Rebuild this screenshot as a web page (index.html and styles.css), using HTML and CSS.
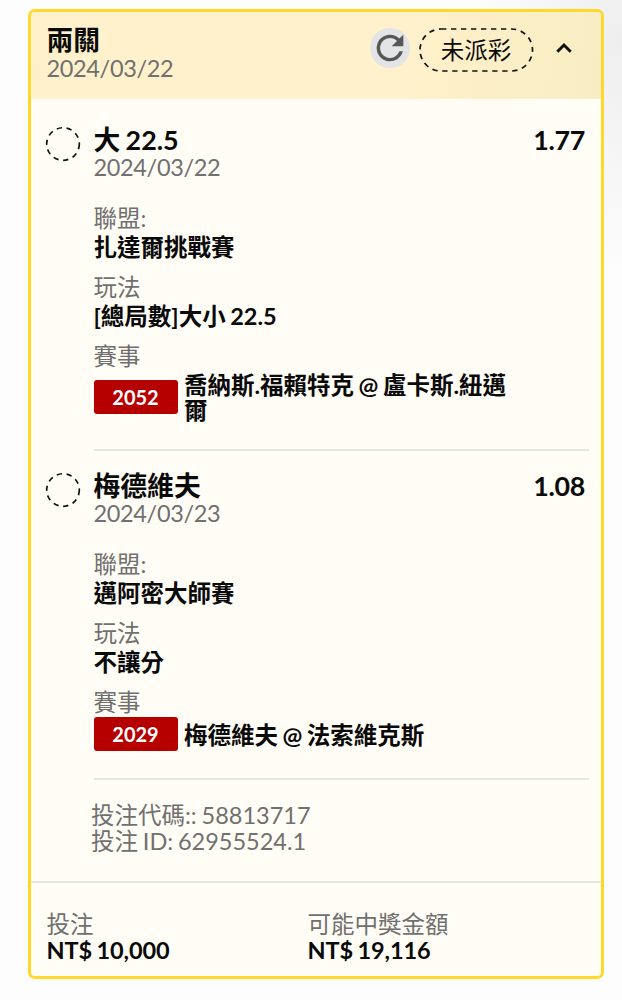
FILE: index.html
```html
<!DOCTYPE html>
<html lang="zh-Hant">

<head>
    <meta charset="UTF-8">
    <meta name="viewport" content="width=device-width, initial-scale=1.0">
    <title>投注</title>
    <link rel="stylesheet" href="styles.css">
</head>

<body>
    <div class="bet-card">
        <div class="bet-header">
            <div class="bet-heading">
                <div class="title">兩關</div>
                <div class="date">2024/03/22</div>
            </div>
            <button class="refresh-button" aria-label="refresh">
                <svg width="40" height="40" viewBox="0 0 24 24">
                    <path d="M17.65 6.35A7.96 7.96 0 0 0 12 4a8 8 0 1 0 7.73 10h-2.08A6 6 0 1 1 12 6c1.66 0 3.14.69 4.22 1.78L13 11h7V4z" fill="#575757" />
                </svg>
            </button>
            <div class="status">
                <svg class="status-outline" width="116" height="46" viewBox="0 0 116 46">
                    <rect x="2" y="2" width="112.5" height="42" rx="21" />
                </svg>
                <span>未派彩</span>
            </div>
            <svg class="chevron" width="18" height="12" viewBox="0 0 18 12">
                <path d="M2.3 9.7L9 3L15.7 9.7" />
            </svg>
        </div>

        <div class="leg">
            <svg class="leg-status" width="36" height="36" viewBox="0 0 36 36">
                <circle cx="18" cy="18" r="16.3" />
            </svg>
            <div class="leg-content">
                <div class="leg-top">
                    <div class="title">大 22.5</div>
                    <div class="odds">1.77</div>
                </div>
                <div class="date">2024/03/22</div>
                <div class="field first">
                    <div class="label">聯盟:</div>
                    <div class="value">扎達爾挑戰賽</div>
                </div>
                <div class="field">
                    <div class="label">玩法</div>
                    <div class="value">[總局數]大小 22.5</div>
                </div>
                <div class="field">
                    <div class="label">賽事</div>
                    <div class="match">
                        <span class="match-code">2052</span>
                        <span class="match-name">喬納斯.福賴特克 @ 盧卡斯.紐邁爾</span>
                    </div>
                </div>
            </div>
        </div>

        <div class="leg">
            <svg class="leg-status" width="36" height="36" viewBox="0 0 36 36">
                <circle cx="18" cy="18" r="16.3" />
            </svg>
            <div class="leg-content">
                <div class="leg-top">
                    <div class="title">梅德維夫</div>
                    <div class="odds">1.08</div>
                </div>
                <div class="date">2024/03/23</div>
                <div class="field first">
                    <div class="label">聯盟:</div>
                    <div class="value">邁阿密大師賽</div>
                </div>
                <div class="field">
                    <div class="label">玩法</div>
                    <div class="value">不讓分</div>
                </div>
                <div class="field">
                    <div class="label">賽事</div>
                    <div class="match">
                        <span class="match-code">2029</span>
                        <span class="match-name">梅德維夫 @ 法索維克斯</span>
                    </div>
                </div>
            </div>
        </div>

        <div class="bet-codes">
            <div>投注代碼:: 58813717</div>
            <div>投注 ID: 62955524.1</div>
        </div>

        <div class="bet-footer">
            <div>
                <div class="footer-label">投注</div>
                <div class="amount">NT$ 10,000</div>
            </div>
            <div>
                <div class="footer-label">可能中獎金額</div>
                <div class="amount">NT$ 19,116</div>
            </div>
        </div>
    </div>
</body>

</html>
```
FILE: styles.css
```css
* {
    box-sizing: border-box;
}

body {
    margin: 0;
    padding: 9px 18px 0 28px;
    height: 1000px;
    overflow: hidden;
    background: radial-gradient(ellipse 150px 240px at 622px 40px, #eeeeee, #fdfdfd);
    color: #0a0a0a;
    font-family: Lato, "Noto Sans CJK TC", sans-serif;
    font-size: 23.5px;
    word-spacing: -1.2px;
}

.bet-card {
    height: 970px;
    border: 3px solid #ffd829;
    border-radius: 7px;
    background-color: #fffdf5;
    overflow: hidden;
}

.bet-header {
    display: flex;
    height: 87px;
    padding: 15px 28px 0 15.5px;
    background: linear-gradient(100deg, #fff1cb 65%, #f8edc2);
}

.bet-heading {
    flex: 1;
    margin-top: -1px;
}

.title,
.odds {
    font-size: 26.8px;
    font-weight: bold;
    line-height: 28px;
}

.odds {
    letter-spacing: -0.3px;
}

.date {
    line-height: 27px;
    color: #707070;
    letter-spacing: -0.35px;
}

.bet-heading .date {
    line-height: 28px;
}

.refresh-button {
    width: 40px;
    height: 40px;
    margin: 1px 8px 0 0;
    padding: 0;
    border: none;
    border-radius: 50%;
    background-color: #e3e4e6;
}

.refresh-button svg {
    display: block;
}

.status {
    position: relative;
    width: 116px;
    height: 46px;
    line-height: 46px;
    text-align: center;
}

.status-outline {
    position: absolute;
    top: 0;
    left: 0;
}

.status-outline rect,
.leg-status circle {
    fill: none;
    stroke: #111;
    stroke-width: 1.7;
    stroke-dasharray: 5.3 4.7;
}

.chevron {
    margin: 15px 0 0 21px;
}

.chevron path {
    fill: none;
    stroke: #111;
    stroke-width: 3;
}

.leg {
    display: flex;
    gap: 12.5px;
    padding: 21px 12px 0 14px;
}

.bet-header + .leg {
    padding-top: 27px;
}

.leg-content {
    flex: 1;
    padding-bottom: 27px;
    border-bottom: 2px solid #e9e6e0;
}

.leg-top {
    display: flex;
    justify-content: space-between;
    padding-right: 4px;
}

.field {
    margin-top: 11px;
}

.field.first {
    margin-top: 23px;
}

.label {
    line-height: 29px;
    color: #707070;
}

.value {
    line-height: 29px;
    font-weight: bold;
}

.match {
    display: flex;
    align-items: center;
    gap: 6.5px;
}

.match-code {
    width: 84px;
    height: 34px;
    border-radius: 3px;
    background-color: #b60000;
    color: #fff;
    font-size: 20px;
    font-weight: bold;
    line-height: 34px;
    text-align: center;
}

.match-name {
    width: 330px;
    padding-top: 2px;
    margin-bottom: -1px;
    font-weight: bold;
    line-height: 25px;
}

.bet-codes {
    padding: 22px 0 27px 60px;
    line-height: 26px;
    color: #707070;
}

.bet-footer {
    display: grid;
    grid-template-columns: 261px 1fr;
    padding: 29px 15.5px 0;
    border-top: 2px solid #e9e6e0;
    line-height: 25.5px;
}

.footer-label {
    color: #707070;
}

.amount {
    font-weight: bold;
    letter-spacing: -0.1px;
}
```
